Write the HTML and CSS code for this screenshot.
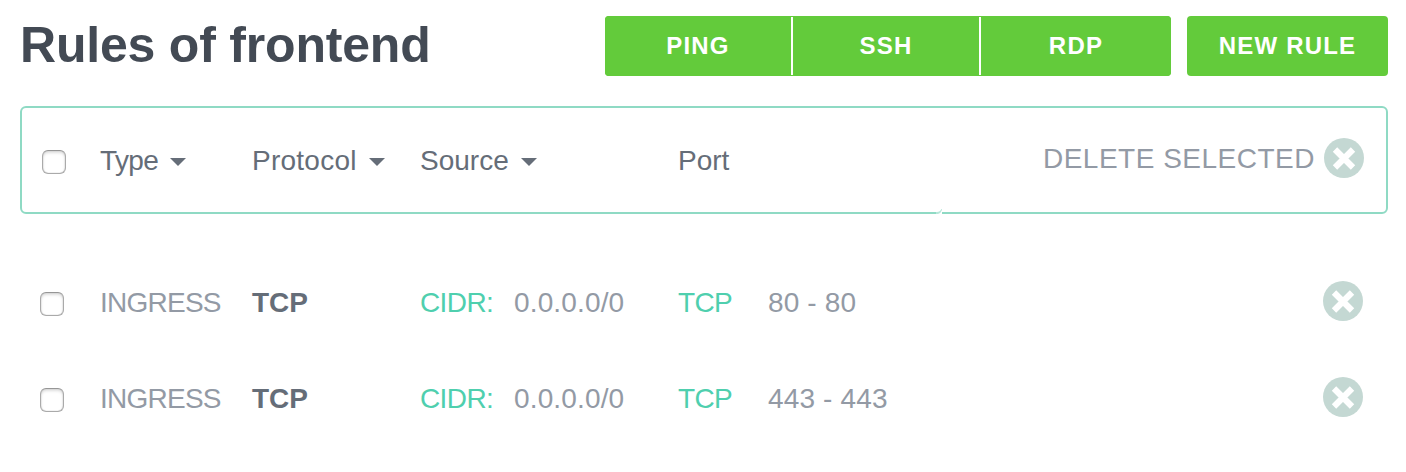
FILE: index.html
```html
<!DOCTYPE html>
<html lang="en">
<head>
<meta charset="utf-8">
<title>Rules of frontend</title>
<link rel="stylesheet" href="styles.css">
</head>
<body>
<svg class="defs" aria-hidden="true"><symbol id="remove" viewBox="0 0 40 40"><circle cx="20" cy="20" r="20" fill="#c4d8d3"/><path d="M11 11.5 29 29.5M29 11.5 11 29.5" stroke="#fff" stroke-width="6.2"/></symbol></svg>
<header class="top">
  <h1 class="title">Rules of frontend</h1>
  <div class="actions">
    <div class="group"><button class="btn">PING</button><i class="divider"></i><button class="btn">SSH</button><i class="divider"></i><button class="btn last">RDP</button></div>
    <button class="btn new">NEW RULE</button>
  </div>
</header>
<section class="row head">
  <i class="check"></i>
  <span class="type">Type<i class="caret"></i></span>
  <span class="protocol">Protocol<i class="caret"></i></span>
  <span class="source">Source<i class="caret"></i></span>
  <span class="port">Port</span>
  <span class="delete">DELETE SELECTED</span>
  <svg class="remove"><use href="#remove"/></svg>
  <svg class="notch" viewBox="0 0 6 6"><path d="M0 4H1Q4 4 5.5 1L6 1V2Q5 5 2 6H0Z" fill="#8fdac4" opacity=".65"/></svg>
</section>
<section class="row rule">
  <i class="check"></i>
  <span class="type">INGRESS</span>
  <b class="protocol">TCP</b>
  <span class="source"><em class="key">CIDR:</em>0.0.0.0/0</span>
  <span class="port"><em class="key">TCP</em>80 - 80</span>
  <svg class="remove"><use href="#remove"/></svg>
</section>
<section class="row rule">
  <i class="check"></i>
  <span class="type">INGRESS</span>
  <b class="protocol">TCP</b>
  <span class="source"><em class="key">CIDR:</em>0.0.0.0/0</span>
  <span class="port"><em class="key">TCP</em>443 - 443</span>
  <svg class="remove"><use href="#remove"/></svg>
</section>
</body>
</html>
```
FILE: styles.css
```css
* { box-sizing: border-box; }
body { margin: 0; padding: 16px 18px 0 20px; background: #fff; color: #939aa5; font: 28px/32px "Liberation Sans", Arial, sans-serif; }
.defs { position: absolute; width: 0; height: 0; }
.top { display: flex; justify-content: space-between; height: 60px; margin-bottom: 30px; }
.title { margin: 0; font-size: 50px; line-height: 58px; letter-spacing: -.2px; color: #434a54; white-space: nowrap; }
.actions { display: flex; gap: 16px; }
.group { display: flex; align-items: center; width: 566px; border-radius: 4px; overflow: hidden; background: #63cb3b; }
.btn { width: 186px; height: 60px; margin: 0; padding: 0; border: 0; background: #63cb3b; color: #fff; font: bold 24px/60px "Liberation Sans", Arial, sans-serif; letter-spacing: 1.2px; }
.last { width: 190px; }
.divider { width: 2px; height: 58px; background: #fff; }
.new { width: 201px; border-radius: 4px; }
.row { display: grid; grid-template-columns: 60px 152px 168px 258px 1fr auto 40px; align-items: center; }
.row > span, .row > b { padding-top: 3px; white-space: nowrap; }
.row .remove { grid-column: 7; width: 40px; height: 40px; }
.head { position: relative; height: 108px; padding: 0 22px 0 20px; border: 2px solid #8fdac4; border-radius: 6px; grid-template-columns: 58px 152px 168px 258px 1fr auto 40px; color: #656d78; }
.row.head > span { padding-top: 1px; }
.row.head .remove { margin-bottom: 4px; }
.rule { height: 96px; padding: 0 25px 0 20px; }
.head + .rule { margin-top: 39px; }
.check { width: 24px; height: 24px; margin-top: 6px; border: 1px solid #aaa; border-top-color: #969696; border-radius: 6px; background: #fff; box-shadow: inset 0 0 1px #999, inset 0 2px 3px #ddd; }
.head .check { margin-top: 4px; }
.caret { display: inline-block; margin-left: 12px; border: 8px solid transparent; border-top-color: #656d78; border-bottom: 0; vertical-align: 4px; }
.head .type { letter-spacing: -.6px; }
.head .protocol { letter-spacing: .25px; }
.rule .type { letter-spacing: -.75px; }
.row.head > .delete { margin-right: 9px; padding: 0 0 3px; color: #939aa5; letter-spacing: .5px; }
.protocol { color: #656d78; }
.key { display: inline-block; color: #4fcfae; font-style: normal; letter-spacing: -.6px; }
.rule .source, .rule .port { letter-spacing: .15px; }
.source .key { width: 94px; }
.port .key { width: 90px; }
.notch { position: absolute; left: 914px; bottom: -2px; width: 6px; height: 6px; background: #fff; }
```
